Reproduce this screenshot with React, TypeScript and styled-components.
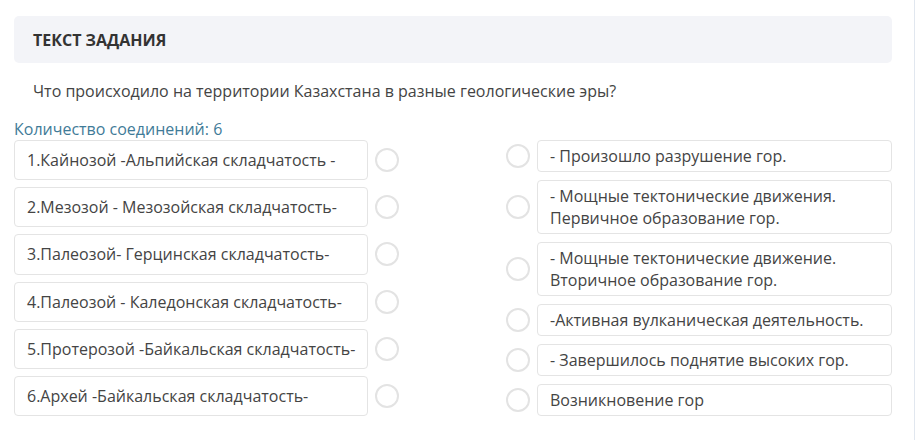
import React from "react";
import styled, { createGlobalStyle } from "styled-components";

const Global = createGlobalStyle`
  html, body { margin: 0; padding: 0; background: #fff; }
  body { font-family: "Open Sans", "Noto Sans", sans-serif; }
  * { box-sizing: border-box; }
`;

const Page = styled.div`
  width: 915px;
  height: 440px;
  padding: 16px 22px 0 14px;
  border-right: 1px solid #e1e7ef;
  color: #444;
  font-size: 16px;
`;

const Header = styled.div`
  height: 47px;
  background: #f3f4f8;
  border-radius: 5px;
  display: flex;
  align-items: center;
  padding-left: 19px;
`;

const Title = styled.h2`
  margin: 0;
  font-size: 16px;
  font-weight: 700;
  color: #333;
`;

const Question = styled.p`
  margin: 17px 0 0;
  padding-left: 19px;
  line-height: 22px;
  color: #444;
`;

const Count = styled.div`
  margin-top: 16px;
  line-height: 22px;
  color: #3f7b98;
`;

const Columns = styled.div`
  display: flex;
  justify-content: space-between;
  align-items: stretch;
`;

const Column = styled.div<{ $gap: number }>`
  display: flex;
  flex-direction: column;
  gap: ${(p) => p.$gap}px;
`;

const Item = styled.div<{ $grow?: boolean }>`
  display: flex;
  align-items: center;
  gap: 7px;
  flex: ${(p) => (p.$grow ? "1 1 0" : "0 0 auto")};
`;

const Box = styled.div<{ $w: number; $nowrap?: boolean }>`
  width: ${(p) => p.$w}px;
  align-self: stretch;
  display: flex;
  align-items: center;
  padding: 4px 8px 4px 12px;
  line-height: 22px;
  white-space: ${(p) => (p.$nowrap ? "nowrap" : "normal")};
  overflow: hidden;
  border: 1px solid #e4e4e4;
  border-radius: 4px;
  background: #fff;
  color: #444;
`;

const Circle = styled.span`
  width: 24px;
  height: 24px;
  flex: 0 0 24px;
  border-radius: 50%;
  border: 2px solid #e3e3e3;
  background: #fff;
`;

const left = [
  "1.Кайнозой -Альпийская складчатость -",
  "2.Мезозой - Мезозойская складчатость-",
  "3.Палеозой- Герцинская складчатость-",
  "4.Палеозой - Каледонская складчатость-",
  "5.Протерозой -Байкальская складчатость-",
  "6.Архей -Байкальская складчатость-",
];

const right = [
  ["- Произошло разрушение гор."],
  ["- Мощные тектонические движения.", "Первичное образование гор."],
  ["- Мощные тектонические движение.", "Вторичное образование гор."],
  ["-Активная вулканическая деятельность."],
  ["- Завершилось поднятие высоких гор."],
  ["Возникновение гор"],
];

export default function App() {
  return (
    <>
      <Global />
      <Page>
        <Header>
          <Title>ТЕКСТ ЗАДАНИЯ</Title>
        </Header>
        <Question>
          Что происходило на территории Казахстана в разные геологические эры?
        </Question>
        <Count>Количество соединений: 6</Count>
        <Columns>
          <Column $gap={7}>
            {left.map((t) => (
              <Item key={t} $grow>
                <Box $w={354} $nowrap>
                  {t}
                </Box>
                <Circle />
              </Item>
            ))}
          </Column>
          <Column $gap={8}>
            {right.map((lines) => (
              <Item key={lines[0]}>
                <Circle />
                <Box $w={355}>
                  <span>
                    {lines.map((l, i) => (
                      <React.Fragment key={i}>
                        {i > 0 && <br />}
                        {l}
                      </React.Fragment>
                    ))}
                  </span>
                </Box>
              </Item>
            ))}
          </Column>
        </Columns>
      </Page>
    </>
  );
}
